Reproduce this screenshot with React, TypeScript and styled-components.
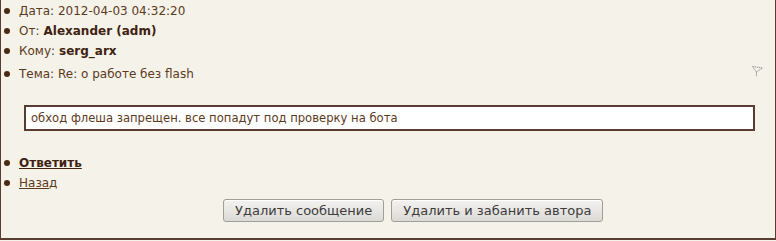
import { ReactElement } from "react";
import styled, { createGlobalStyle } from "styled-components";

const GlobalStyle = createGlobalStyle`
  body {
    margin: 0;
    background: #f5f2ea;
    font-family: "DejaVu Sans", Verdana, sans-serif;
    font-size: 12px;
    color: #5c3a1c;
  }
`;

const Frame = styled.div`
  width: 774px;
  height: 238px;
  border-left: 1px solid #5a3d32;
  border-right: 2px solid #5a3d32;
  border-bottom: 2px solid #5a3d32;
  background: #f5f2ea;
  box-sizing: content-box;
`;

const List = styled.ul`
  margin: 0;
  padding: 1px 0 0;
  list-style: none;
`;

const Item = styled.li<{ $spaced?: boolean }>`
  display: flex;
  align-items: center;
  height: 20px;
  margin-top: ${(p) => (p.$spaced ? "3px" : "0")};
  &::before {
    content: "";
    flex: none;
    width: 6px;
    height: 6px;
    border-radius: 50%;
    background: #4a2a12;
    margin: 0 9px 0 3px;
  }
`;

const Value = styled.b`
  color: #3f2210;
  margin-left: 4px;
`;

const SubjectRow = styled.div`
  flex: 1;
  display: flex;
  align-items: center;
  justify-content: space-between;
  padding-right: 12px;
`;

const Flag = styled.svg`
  width: 11px;
  height: 11px;
  margin-top: -5px;
`;

const MessageBox = styled.div`
  margin: 21px 0 0 23px;
  width: 717px;
  height: 22px;
  border: 2px solid #5a3d32;
  background: #fff;
  padding: 0 5px;
  line-height: 22px;
  font-size: 11.6px;
  color: #5c3a1c;
`;

const Actions = styled(List)`
  margin-top: 22px;
  padding-top: 0;
`;

const Link = styled.a<{ $strong?: boolean }>`
  color: ${(p) => (p.$strong ? "#3f2210" : "#5c3a1c")};
  font-weight: ${(p) => (p.$strong ? "bold" : "normal")};
  text-decoration: underline;
`;

const Buttons = styled.div`
  display: flex;
  gap: 7px;
  padding-left: 222px;
  margin-top: 6px;
`;

const Button = styled.button`
  height: 23px;
  padding: 0 11px;
  border: 1px solid #a19e98;
  border-radius: 3px;
  background: linear-gradient(#f3f2f0, #dcdad5);
  font-family: "DejaVu Sans", sans-serif;
  font-size: 13px;
  color: #3c3c3c;
  box-shadow: inset 0 1px 0 #fff;
`;

const App = (): ReactElement => {
  return (
    <>
      <GlobalStyle />
      <Frame>
        <List>
          <Item>Дата: 2012-04-03 04:32:20</Item>
          <Item>
            От:<Value>Alexander (adm)</Value>
          </Item>
          <Item>
            Кому:<Value>serg_arx</Value>
          </Item>
          <Item $spaced>
            <SubjectRow>
              <span>Тема: Re: о работе без flash</span>
              <Flag viewBox="0 0 11 11">
                <path
                  d="M0.5 0.5 L10.5 2 L4.5 6 Z M4.5 6 L4.5 10.5"
                  fill="none"
                  stroke="#9a9699"
                  strokeWidth="1"
                  strokeDasharray="1.5 0.6"
                />
              </Flag>
            </SubjectRow>
          </Item>
        </List>
        <MessageBox>
          обход флеша запрещен. все попадут под проверку на бота
        </MessageBox>
        <Actions>
          <Item>
            <Link href="#" $strong>
              Ответить
            </Link>
          </Item>
          <Item>
            <Link href="#">Назад</Link>
          </Item>
        </Actions>
        <Buttons>
          <Button>Удалить сообщение</Button>
          <Button>Удалить и забанить автора</Button>
        </Buttons>
      </Frame>
    </>
  );
};

export default App;
